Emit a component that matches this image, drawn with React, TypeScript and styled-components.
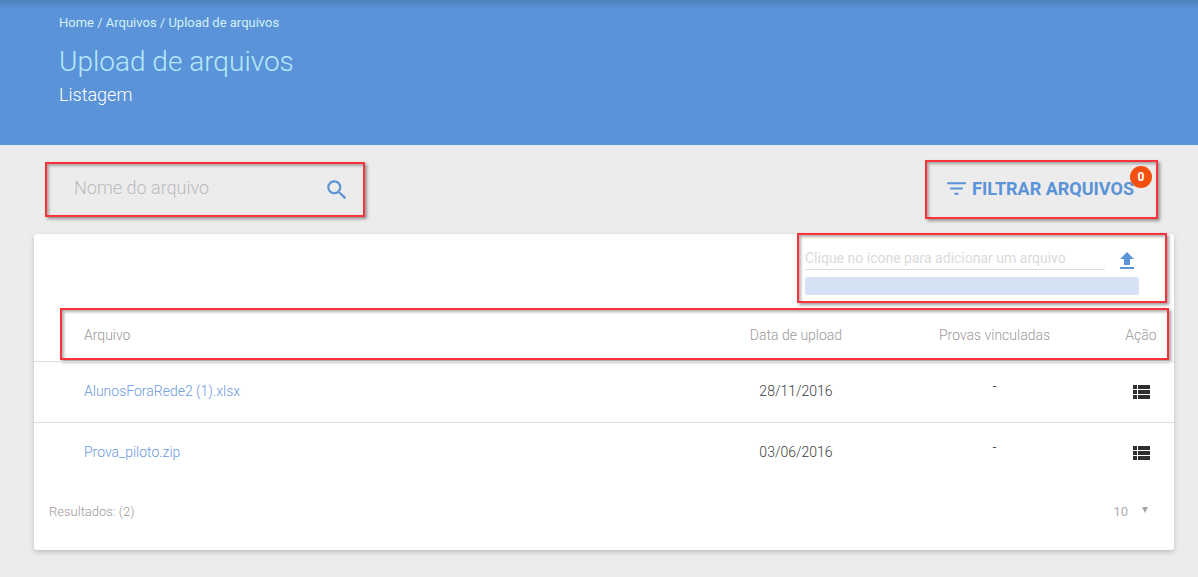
import styled, { createGlobalStyle, css } from "styled-components";

const GlobalStyle = createGlobalStyle`
  html, body {
    margin: 0;
    padding: 0;
    background: #ececec;
    font-family: Roboto, "Liberation Sans", sans-serif;
  }
`;

const outlined = css`
  box-sizing: border-box;
  border: 2px solid #f8343a;
  box-shadow: 2px 2px 3px rgba(60, 60, 60, 0.5),
    inset 2px 2px 3px rgba(60, 60, 60, 0.4);
`;

const rowColumns = css`
  display: grid;
  grid-template-columns: 1fr 156px 161px 52px;
  column-gap: 40px;
  align-items: center;
`;

const Page = styled.div`
  width: 1198px;
  height: 577px;
  overflow: hidden;
  background: #ececec;
`;

const Header = styled.header`
  box-sizing: border-box;
  height: 145px;
  padding: 15px 0 0 59px;
  background: linear-gradient(#4d7fbb, #5a93d7 9px);
`;

const Breadcrumb = styled.div`
  font-size: 13px;
  line-height: 15px;
  color: #d4f1fb;
`;

const Title = styled.h1`
  margin: 15px 0 0;
  font-size: 28px;
  line-height: 34px;
  font-weight: 300;
  color: #b5e9fb;
`;

const Subtitle = styled.div`
  margin-top: 5px;
  font-size: 18px;
  line-height: 22px;
  font-weight: 300;
  color: #ffffff;
`;

const Toolbar = styled.div`
  box-sizing: border-box;
  display: flex;
  justify-content: space-between;
  align-items: center;
  height: 89px;
  padding: 0 40px 0 45px;
`;

const SearchBox = styled.div`
  ${outlined}
  display: flex;
  align-items: center;
  justify-content: space-between;
  width: 320px;
  height: 55px;
  padding: 0 13px 0 27px;
  font-size: 18px;
  font-weight: 300;
  color: #bbbbbb;
`;

const SearchLabel = styled.span`
  padding-bottom: 5px;
`;

const SearchIcon = styled.span`
  display: flex;
  color: #5a93d7;
`;

const FilterBox = styled.div`
  ${outlined}
  position: relative;
  display: flex;
  align-items: center;
  gap: 3px;
  width: 233px;
  height: 59px;
  padding: 0 0 2px 17px;
  font-size: 18px;
  font-weight: 700;
  color: #5a93d7;
`;

const Badge = styled.span`
  position: absolute;
  top: 4px;
  right: 4px;
  width: 22px;
  height: 22px;
  border-radius: 50%;
  background: #f4500f;
  color: #ffffff;
  font-size: 12px;
  line-height: 22px;
  text-align: center;
`;

const Card = styled.main`
  box-sizing: border-box;
  width: 1140px;
  height: 316px;
  margin-left: 34px;
  background: #ffffff;
  border-radius: 3px;
  box-shadow: 0 2px 5px rgba(0, 0, 0, 0.2);
`;

const UploadRow = styled.div`
  display: flex;
  justify-content: flex-end;
  padding-right: 7px;
`;

const UploadBox = styled.div`
  ${outlined}
  width: 370px;
  height: 70px;
  margin-top: -1px;
  padding: 11px 0 0 6px;
`;

const UploadField = styled.div`
  display: flex;
  align-items: flex-start;
  height: 24px;
`;

const UploadInput = styled.div`
  box-sizing: border-box;
  width: 300px;
  height: 24px;
  border-bottom: 1px solid #dddddd;
  font-size: 14px;
  line-height: 24px;
  color: #dadada;
`;

const UploadButton = styled.span`
  display: flex;
  margin: 3px 0 0 10px;
  color: #5a93d7;
`;

const Progress = styled.div`
  width: 334px;
  height: 18px;
  margin-top: 7px;
  background: #d5e2f4;
  border-radius: 2px;
`;

const HeadRow = styled.div`
  ${rowColumns}
  ${outlined}
  height: 52px;
  margin: 5px 5px 0 26px;
  padding: 2px 0 0 22px;
  font-size: 14px;
  font-weight: 300;
  color: #9d9898;
`;

const BodyRow = styled.div<{ $first?: boolean }>`
  ${rowColumns}
  box-sizing: border-box;
  height: 61px;
  padding: 0 7px 0 50px;
  border-top: 1px solid #dddddd;
  margin-top: ${(p) => (p.$first ? "1px" : "0")};
  font-size: 14px;
  font-weight: 300;
  color: #3c3c3c;
`;

const Cell = styled.span<{ $raised?: boolean }>`
  text-align: center;
  color: ${(p) => (p.$raised ? "#111111" : "inherit")};
  padding-bottom: ${(p) => (p.$raised ? "12px" : "0")};
`;

const BodyCell = styled(Cell)`
  padding-bottom: 2px;
`;

const FileLink = styled.a`
  padding-bottom: 2px;
  color: #6a9ade;
`;

const ActionCell = styled.span`
  display: flex;
  justify-content: center;
  color: #2e2e2e;
`;

const Footer = styled.div`
  display: flex;
  justify-content: space-between;
  align-items: center;
  height: 56px;
  padding: 0 26px 0 15px;
  font-size: 13px;
  font-weight: 300;
  color: #9d9898;
`;

const PageSize = styled.span`
  display: flex;
  align-items: center;
  gap: 14px;
  font-weight: 400;
  color: #aeacb4;
`;

const Caret = styled.span`
  width: 0;
  height: 0;
  margin-bottom: 2px;
  border-left: 3px solid transparent;
  border-right: 3px solid transparent;
  border-top: 6px solid #a5a5a5;
`;

const Icon = ({ d, size }: { d: string; size: number }) => (
  <svg width={size} height={size} viewBox="0 0 24 24" fill="currentColor">
    <path d={d} />
  </svg>
);

const paths = {
  search:
    "M15.5 14h-.79l-.28-.27A6.47 6.47 0 0 0 16 9.5 6.5 6.5 0 1 0 9.5 16c1.61 0 3.09-.59 4.23-1.57l.27.28v.79l5 4.99L20.49 19l-4.99-5zm-6 0C7.01 14 5 11.99 5 9.5S7.01 5 9.5 5 14 7.01 14 9.5 11.99 14 9.5 14z",
  filter: "M10 18h4v-2h-4v2zM3 6v2h18V6H3zm3 7h12v-2H6v2z",
  upload: "M9 16h6v-6h4l-7-7-7 7h4zm-4 2h14v2H5z",
  list: "M4 14h4v-4H4v4zm0 5h4v-4H4v4zM4 9h4V5H4v4zm5 5h12v-4H9v4zm0 5h12v-4H9v4zM9 5v4h12V5H9z",
};

const files = [
  { name: "AlunosForaRede2 (1).xlsx", date: "28/11/2016" },
  { name: "Prova_piloto.zip", date: "03/06/2016" },
];

const App = () => {
  return (
    <Page>
      <GlobalStyle />
      <Header>
        <Breadcrumb>Home / Arquivos / Upload de arquivos</Breadcrumb>
        <Title>Upload de arquivos</Title>
        <Subtitle>Listagem</Subtitle>
      </Header>
      <Toolbar>
        <SearchBox>
          <SearchLabel>Nome do arquivo</SearchLabel>
          <SearchIcon>
            <Icon d={paths.search} size={26} />
          </SearchIcon>
        </SearchBox>
        <FilterBox>
          <Icon d={paths.filter} size={25} />
          FILTRAR ARQUIVOS
          <Badge>0</Badge>
        </FilterBox>
      </Toolbar>
      <Card>
        <UploadRow>
          <UploadBox>
            <UploadField>
              <UploadInput>Clique no ícone para adicionar um arquivo</UploadInput>
              <UploadButton>
                <Icon d={paths.upload} size={24} />
              </UploadButton>
            </UploadField>
            <Progress />
          </UploadBox>
        </UploadRow>
        <HeadRow>
          <span>Arquivo</span>
          <Cell>Data de upload</Cell>
          <Cell>Provas vinculadas</Cell>
          <Cell>Ação</Cell>
        </HeadRow>
        {files.map((file, i) => (
          <BodyRow key={file.name} $first={i === 0}>
            <FileLink>{file.name}</FileLink>
            <BodyCell>{file.date}</BodyCell>
            <Cell $raised>-</Cell>
            <ActionCell>
              <Icon d={paths.list} size={24} />
            </ActionCell>
          </BodyRow>
        ))}
        <Footer>
          <span>Resultados: (2)</span>
          <PageSize>
            10
            <Caret />
          </PageSize>
        </Footer>
      </Card>
    </Page>
  );
};

export default App;
